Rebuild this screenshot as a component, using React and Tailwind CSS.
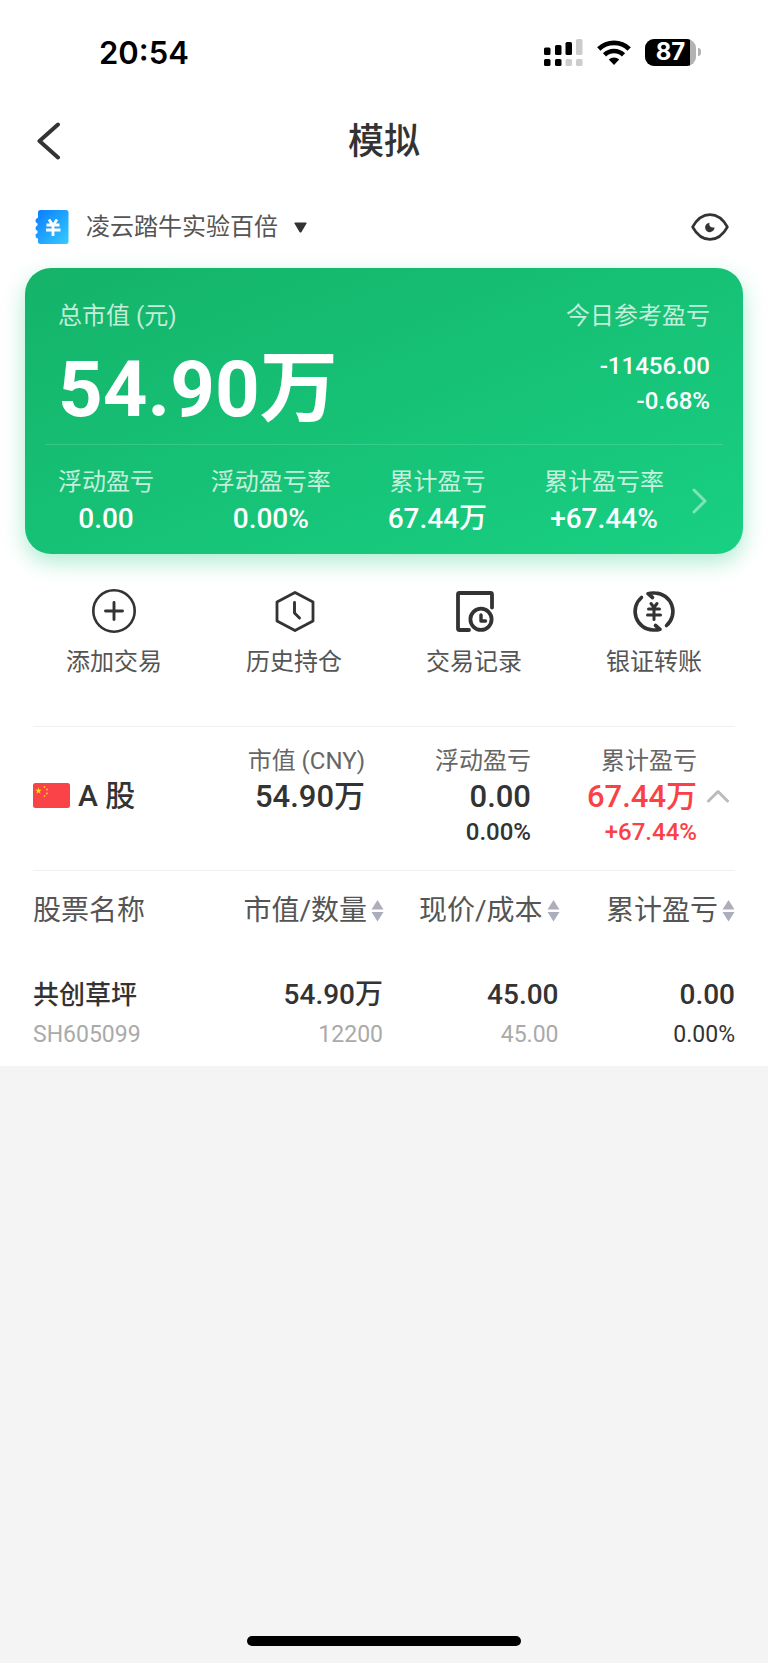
import { useState } from "react";

const SUMMARY = [
  { label: "浮动盈亏", value: "0.00" },
  { label: "浮动盈亏率", value: "0.00%" },
  { label: "累计盈亏", value: "67.44万" },
  { label: "累计盈亏率", value: "+67.44%" },
];

const COLUMNS = ["市值/数量", "现价/成本", "累计盈亏"];

const STOCKS = [
  {
    name: "共创草坪",
    code: "SH605099",
    marketValue: "54.90万",
    amount: "12200",
    price: "45.00",
    cost: "45.00",
    profit: "0.00",
    profitRate: "0.00%",
  },
];

function SignalIcon() {
  return (
    <svg width="40" height="28" viewBox="0 0 40 28" fill="#000">
      <rect x="1" y="9.500" width="6.500" height="7.500" rx="1.500" />
      <rect x="12" y="7" width="6.500" height="10" rx="1.500" />
      <rect x="22.500" y="4" width="6.500" height="13" rx="1.500" />
      <rect x="33" y="1" width="6.500" height="16" rx="1.500" fill="#ccc" />
      <rect x="1" y="21" width="6.500" height="7" rx="1.500" />
      <rect x="12" y="21" width="6.500" height="7" rx="1.500" />
      <rect x="22.500" y="21" width="6.500" height="7" rx="1.500" fill="#ccc" />
      <rect x="33" y="21" width="6.500" height="7" rx="1.500" fill="#ccc" />
    </svg>
  );
}

function WifiIcon() {
  return (
    <svg width="34" height="25" viewBox="0 0 34 25" fill="none" stroke="#000">
      <path d="M1.800 9a22 22 0 0 1 30.400 0" strokeWidth="4.800" />
      <path d="M7.500 14.800a13.600 13.600 0 0 1 19 0" strokeWidth="4.600" />
      <path d="M17 25l-5.200-5.400a7.600 7.600 0 0 1 10.400 0z" fill="#000" stroke="none" />
    </svg>
  );
}

function Battery() {
  return (
    <div className="flex items-center gap-0.5">
      <div className="flex h-[27px] w-[51px] overflow-hidden rounded-[9px] bg-[#b3b3b3]">
        <div className="flex w-[45px] items-center justify-center bg-black pl-1.5 font-['Inter',sans-serif] text-[24px] leading-none font-bold text-white">
          87
        </div>
      </div>
      <div className="h-2 w-[3px] rounded-r-full bg-[#b3b3b3]" />
    </div>
  );
}

function WalletIcon() {
  return (
    <svg width="34" height="34" viewBox="0 0 34 34">
      <defs>
        <linearGradient id="wallet" x1="0" y1="0" x2="1" y2="1">
          <stop offset="0" stopColor="#0a7bff" />
          <stop offset="1" stopColor="#35ccff" />
        </linearGradient>
      </defs>
      <path
        d="M5.500 0H31a2.500 2.500 0 0 1 2.500 2.500v29a2.500 2.500 0 0 1-2.500 2.500H5.500A2.500 2.500 0 0 1 3 31.500v-3a3 3 0 0 1-2.500-3c0-1.500 1-2 2-2.200v-2.500c-1-.3-2-1-2-2.500s1-2.400 2-2.700v-2.400c-1-.3-2-1.200-2-2.500 0-1.400 1-2.400 2.500-2.900V2.500A2.500 2.500 0 0 1 5.500 0z"
        fill="url(#wallet)"
      />
      <path
        d="M14 9.500l3 4.500M22 9.500l-3 4.500M11.500 15h13M11 20h14.500M18 14.500v11.500"
        fill="none"
        stroke="#fff"
        strokeWidth="2.800"
      />
    </svg>
  );
}

function EyeIcon() {
  return (
    <svg width="38" height="28" viewBox="0 0 38 28">
      <path
        d="M1.600 14C6 6 12 1.600 19 1.600S32 6 36.400 14C32 22 26 26.400 19 26.400S6 22 1.600 14z"
        fill="none"
        stroke="#333"
        strokeWidth="2.600"
        strokeLinejoin="round"
      />
      <path d="M18.600 9.800a4.700 4.700 0 1 0 4.900 4.400c-1.500.6-3.200.4-4.200-.6s-1.300-2.400-.7-3.800z" fill="#333" />
    </svg>
  );
}

function AddIcon() {
  return (
    <svg width="44" height="44" viewBox="0 0 44 44" fill="none" stroke="#333" strokeLinecap="round">
      <circle cx="22" cy="22" r="20.700" strokeWidth="2.600" />
      <path d="M22 13.500v17M13.500 22h17" strokeWidth="2.900" />
    </svg>
  );
}

function HistoryIcon() {
  return (
    <svg width="44" height="44" viewBox="0 0 44 44" fill="none" stroke="#333" strokeLinecap="round" strokeLinejoin="round">
      <path d="M23 3.500l18 9.500v19L23 41.500 5 32V13z" strokeWidth="2.800" />
      <path d="M22.500 13.500V24l5 5" strokeWidth="2.900" />
    </svg>
  );
}

function RecordIcon() {
  return (
    <svg width="44" height="44" viewBox="0 0 44 44" fill="none" stroke="#333" strokeWidth="3.800" strokeLinecap="round" strokeLinejoin="round">
      <path d="M17 41H7.500A1.500 1.500 0 0 1 6 39.500V5.500A1.500 1.500 0 0 1 7.500 4h31A1.500 1.500 0 0 1 40 5.500v13" />
      <circle cx="29" cy="30.300" r="10.600" />
      <path d="M29 26v6h4.500" strokeWidth="3.400" />
    </svg>
  );
}

function TransferIcon() {
  return (
    <svg width="44" height="44" viewBox="0 0 44 44" fill="none" stroke="#333" strokeWidth="3.600" strokeLinecap="round" strokeLinejoin="round">
      <path d="M9.500 8.500A18.500 18.500 0 0 0 21 41q4 .3 7-.7L23.500 36.500" />
      <path d="M34.500 36.500A18.500 18.500 0 0 0 23 4q-4-.3-7 .7L20.500 8.500" />
      <path d="M19 14.500l3 4 3-4M16.500 20h11M15.500 26h13M22 20v10.500" strokeWidth="3" />
    </svg>
  );
}

function ChinaFlag() {
  return (
    <svg width="37" height="25" viewBox="0 0 37 25" className="shrink-0">
      <rect width="37" height="25" rx="2.500" fill="#f94348" />
      <path d="M5.500 4.500l.8 2.300h2.400L6.800 8.300l.7 2.400-2-1.500-2 1.500.7-2.400-1.900-1.500h2.400z" fill="#ffe600" />
      <g fill="#ffd21f">
        <circle cx="11.500" cy="4" r=".9" />
        <circle cx="14" cy="6.500" r=".9" />
        <circle cx="14" cy="10.500" r=".9" />
        <circle cx="11.500" cy="13" r=".9" />
      </g>
    </svg>
  );
}

function SortIcon() {
  return (
    <svg width="13" height="22" viewBox="0 0 13 22" fill="#adaebc" className="shrink-0">
      <path d="M6.500 0L12.500 9.500H.5zM6.500 21.500L.5 12h12z" />
    </svg>
  );
}

const ACTIONS = [
  { label: "添加交易", Icon: AddIcon },
  { label: "历史持仓", Icon: HistoryIcon },
  { label: "交易记录", Icon: RecordIcon },
  { label: "银证转账", Icon: TransferIcon },
];

function MarketStat({ label, value, rate, color }) {
  return (
    <div className={`text-right font-medium ${color}`}>
      <div className="text-[24px] leading-[34px] font-normal text-[#666]">{label}</div>
      <div className="text-[31px] leading-[38px]">{value}</div>
      {rate && <div className="text-[24px] leading-[32px]">{rate}</div>}
    </div>
  );
}

export default function App() {
  const [open, setOpen] = useState(true);

  return (
    <div className="flex min-h-screen flex-col bg-[#f4f4f4] font-['Roboto','Noto_Sans_CJK_SC',sans-serif] text-[#333]">
      <div className="bg-white">
        {/* Status bar */}
        <div className="flex h-[104px] items-center justify-between pr-[67px] pl-[99px]">
          <span className="pt-0.5 font-['Inter',sans-serif] text-[31px] font-semibold text-black">20:54</span>
          <div className="flex items-center gap-3.5">
            <SignalIcon />
            <WifiIcon />
            <Battery />
          </div>
        </div>

        <header className="grid h-[74px] grid-cols-[1fr_auto_1fr] items-center px-[37px]">
          <button type="button" aria-label="返回" className="justify-self-start">
            <svg width="24" height="38" viewBox="0 0 24 38" fill="none" stroke="#333" strokeWidth="4" strokeLinecap="round" strokeLinejoin="round">
              <path d="M21 2.500L2.500 19 21 35.500" />
            </svg>
          </button>
          <h1 className="pt-0.5 text-[36px] font-medium">模拟</h1>
        </header>

        <div className="flex h-[90px] items-center justify-between pt-2 pr-[39px] pl-[35px]">
          <button type="button" className="flex items-center text-[24px] text-[#555]">
            <WalletIcon />
            <span className="ml-[17px]">凌云踏牛实验百倍</span>
            <svg width="13" height="11" viewBox="0 0 13 11" fill="#333" className="ml-4">
              <path d="M1 .5h11q1 0 .5 1L7.500 10q-1 1.200-2 0L.5 1.500Q0 .5 1 .5z" />
            </svg>
          </button>
          <button type="button" aria-label="隐藏金额">
            <EyeIcon />
          </button>
        </div>

        {/* Asset card */}
        <section className="mx-[25px] rounded-[26px] bg-linear-to-br from-[#14b369] to-[#18d083] text-white shadow-[0_8px_22px_rgba(24,200,125,0.35)]">
          <div className="flex justify-between px-[33px] pt-[30px] pb-[14px]">
            <div>
              <div className="text-[24px] leading-[36px] text-white/75">总市值 (元)</div>
              <div className="mt-4 text-[78px] leading-[80px] font-bold">54.90万</div>
            </div>
            <div className="text-right">
              <div className="text-[24px] leading-[36px] text-white/75">今日参考盈亏</div>
              <div className="mt-[15px] text-[24px] leading-[35px] font-medium">
                <div>-11456.00</div>
                <div>-0.68%</div>
              </div>
            </div>
          </div>
          <div className="mx-5 border-t border-white/15" />
          <div className="flex items-center pt-[19px] pr-9 pb-4 pl-[33px]">
            <dl className="flex flex-1 justify-between text-center">
              {SUMMARY.map((s) => (
                <div key={s.label}>
                  <dt className="text-[24px] leading-[36px] text-white/75">{s.label}</dt>
                  <dd className="text-[28px] leading-[38px] font-medium">{s.value}</dd>
                </div>
              ))}
            </dl>
            <button type="button" aria-label="查看详情" className="ml-7">
              <svg width="15" height="26" viewBox="0 0 15 26" fill="none" stroke="#fff" strokeOpacity=".45" strokeWidth="3" strokeLinecap="round" strokeLinejoin="round">
                <path d="M2 2l11 11L2 24" />
              </svg>
            </button>
          </div>
        </section>

        <nav className="grid grid-cols-4 px-6 pt-[35px] pb-[46px]">
          {ACTIONS.map(({ label, Icon }) => (
            <button key={label} type="button" className="flex flex-col items-center gap-[11px]">
              <Icon />
              <span className="text-[24px] leading-[36px] text-[#555]">{label}</span>
            </button>
          ))}
        </nav>

        {/* Market summary */}
        <div className="mx-[33px] grid grid-cols-[1fr_1fr_1fr_1fr_38px] border-y border-[#f0f0f0] pt-[17px] pb-[22px]">
          <div className="flex h-[102px] items-center gap-2 text-[30px] font-medium">
            <ChinaFlag />
            <h2>A 股</h2>
          </div>
          <MarketStat label="市值 (CNY)" value="54.90万" color="text-[#333]" />
          <MarketStat label="浮动盈亏" value="0.00" rate="0.00%" color="text-[#333]" />
          <MarketStat label="累计盈亏" value="67.44万" rate="+67.44%" color="text-[#fb4145]" />
          <button
            type="button"
            aria-label="展开或收起"
            aria-expanded={open}
            onClick={() => setOpen(!open)}
            className="flex h-[104px] items-center pl-2.5"
          >
            <svg
              width="22"
              height="14"
              viewBox="0 0 22 14"
              fill="none"
              stroke="#bbb"
              strokeWidth="3"
              strokeLinecap="round"
              strokeLinejoin="round"
              className={open ? "" : "rotate-180"}
            >
              <path d="M1.500 12L11 2.500 20.500 12" />
            </svg>
          </button>
        </div>

        {/* Holdings */}
        {open && (
          <div className="px-[33px]">
            <table className="w-full table-fixed text-right">
              <thead>
                <tr className="h-[80px] text-[28px] text-[#555]">
                  <th scope="col" className="text-left font-normal">
                    股票名称
                  </th>
                  {COLUMNS.map((c) => (
                    <th key={c} scope="col" className="font-normal">
                      <button type="button" className="inline-flex items-center gap-1 whitespace-nowrap">
                        {c}
                        <SortIcon />
                      </button>
                    </th>
                  ))}
                </tr>
              </thead>
              <tbody>
                {STOCKS.map((s) => (
                  <tr key={s.code} className="text-[28px] leading-[40px] font-medium">
                    <td className="pt-6 pb-[11px] text-left">
                      <div className="text-[26px]">{s.name}</div>
                      <div className="text-[23px] font-normal text-[#aaa]">{s.code}</div>
                    </td>
                    <td className="pt-6 pr-px pb-[11px]">
                      <div>{s.marketValue}</div>
                      <div className="text-[23px] font-normal text-[#aaa]">{s.amount}</div>
                    </td>
                    <td className="pt-6 pr-px pb-[11px]">
                      <div>{s.price}</div>
                      <div className="text-[23px] font-normal text-[#aaa]">{s.cost}</div>
                    </td>
                    <td className="pt-6 pb-[11px]">
                      <div>{s.profit}</div>
                      <div className="text-[23px] font-normal">{s.profitRate}</div>
                    </td>
                  </tr>
                ))}
              </tbody>
            </table>
          </div>
        )}
      </div>

      {/* Home indicator */}
      <div className="mx-auto mt-auto mb-[17px] h-2.5 w-[274px] rounded-full bg-black" />
    </div>
  );
}
